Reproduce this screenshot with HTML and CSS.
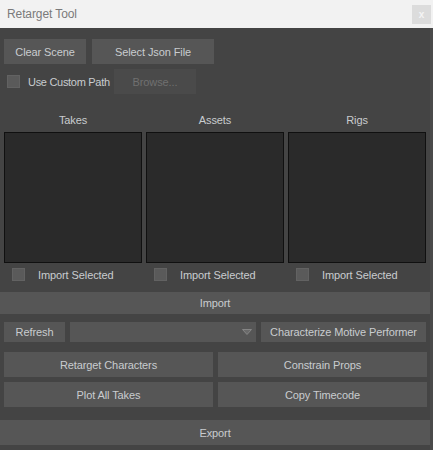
FILE: index.html
```html
<!DOCTYPE html>
<html lang="en">
<head>
    <meta charset="UTF-8">
    <title>Retarget Tool</title>
    <link rel="stylesheet" href="styles.css">
</head>
<body>
    <div class="window">
        <div class="titlebar">
            <span class="title">Retarget Tool</span>
            <span class="close">x</span>
        </div>

        <div class="main">
            <div class="toolbar">
                <button class="btn btn-clear">Clear Scene</button>
                <button class="btn btn-json">Select Json File</button>
            </div>

            <div class="path-row">
                <span class="check"></span>
                <span class="path-label">Use Custom Path</span>
                <button class="btn btn-browse">Browse...</button>
            </div>

            <div class="columns">
                <div class="column">
                    <div class="heading">Takes</div>
                    <div class="list"></div>
                    <div class="select-row"><span class="check"></span><span>Import Selected</span></div>
                </div>
                <div class="column">
                    <div class="heading">Assets</div>
                    <div class="list"></div>
                    <div class="select-row"><span class="check"></span><span>Import Selected</span></div>
                </div>
                <div class="column">
                    <div class="heading">Rigs</div>
                    <div class="list"></div>
                    <div class="select-row"><span class="check"></span><span>Import Selected</span></div>
                </div>
            </div>

            <button class="btn wide btn-import">Import</button>

            <div class="performer-row">
                <button class="btn btn-refresh">Refresh</button>
                <div class="combo">
                    <svg width="10" height="6" viewBox="0 0 10 6"><path d="M0.5 0.5 L9.5 0.5 L5 5.5 Z" fill="#6a6a6a" stroke="#858585" stroke-width="1"/></svg>
                </div>
                <button class="btn btn-characterize">Characterize Motive Performer</button>
            </div>

            <div class="actions">
                <button class="btn">Retarget Characters</button>
                <button class="btn">Constrain Props</button>
                <button class="btn">Plot All Takes</button>
                <button class="btn">Copy Timecode</button>
            </div>

            <button class="btn wide btn-export">Export</button>
        </div>
    </div>
</body>
</html>
```

FILE: styles.css
```css
body {
    margin: 0;
    padding: 0;
    background-color: #444444;
    font-family: "Liberation Sans", Arial, sans-serif;
    font-size: 11px;
    letter-spacing: -0.1px;
    color: #c9cccf;
}
.window {
    width: 430px;
    height: 450px;
    background-color: #444444;
    border-right: 3px solid #4a4a4a;
}
.titlebar {
    height: 28px;
    background-color: #f2f2f2;
    display: flex;
    align-items: center;
    justify-content: space-between;
    padding: 0 0 0 7px;
    margin-right: -3px;
}
.title {
    font-size: 12px;
    letter-spacing: -0.1px;
    color: #7a7a7a;
}
.close {
    width: 19px;
    height: 19px;
    margin-right: 2px;
    background-color: #dcdcdc;
    color: #f4f4f4;
    font-size: 10px;
    font-weight: bold;
    display: flex;
    align-items: center;
    justify-content: center;
}
.main {
    padding: 11px 0 0 4px;
}
.btn {
    font-family: inherit;
    font-size: 11px;
    letter-spacing: -0.1px;
    color: #c9cccf;
    background-color: #565656;
    border: none;
    padding: 0;
    height: 25px;
    display: block;
    white-space: nowrap;
}
.toolbar {
    display: flex;
    gap: 6px;
}
.btn-clear {
    width: 82px;
}
.btn-json {
    width: 122px;
}
.path-row {
    display: flex;
    align-items: center;
    margin-top: 5px;
    height: 25px;
}
.check {
    display: inline-block;
    width: 11px;
    height: 11px;
    background-color: #5a5a5a;
    border: 1px solid #626262;
    flex-shrink: 0;
}
.path-row .check {
    margin-left: 3px;
}
.path-label {
    width: 86px;
    padding-left: 8px;
    letter-spacing: -0.3px;
    white-space: nowrap;
    flex-shrink: 0;
}
.btn-browse {
    width: 82px;
    background-color: #4a4a4a;
    color: #707070;
}
.columns {
    display: flex;
    gap: 4px;
    margin-top: 19px;
}
.column {
    width: 138px;
}
.heading {
    text-align: center;
    height: 14px;
    line-height: 14px;
}
.list {
    margin-top: 5px;
    height: 131px;
    box-sizing: border-box;
    border: 1px solid #101010;
    background-color: #2a2a2a;
}
.select-row {
    display: flex;
    align-items: center;
    margin-top: 5px;
    height: 13px;
}
.select-row .check {
    margin-left: 8px;
    margin-right: 13px;
}
.wide {
    width: 430px;
    margin-left: -4px;
}
.btn-import {
    height: 22px;
    margin-top: 11px;
}
.performer-row {
    display: flex;
    gap: 5px;
    margin-top: 8px;
    height: 20px;
}
.performer-row .btn {
    height: 20px;
}
.btn-refresh {
    width: 61px;
}
.combo {
    width: 186px;
    background-color: #565656;
    display: flex;
    align-items: center;
    justify-content: flex-end;
    padding-right: 4px;
    box-sizing: border-box;
}
.btn-characterize {
    width: 165px;
}
.actions {
    display: grid;
    grid-template-columns: 209px 209px;
    gap: 5px;
    margin-top: 10px;
}
.btn-export {
    margin-top: 13px;
}
```
